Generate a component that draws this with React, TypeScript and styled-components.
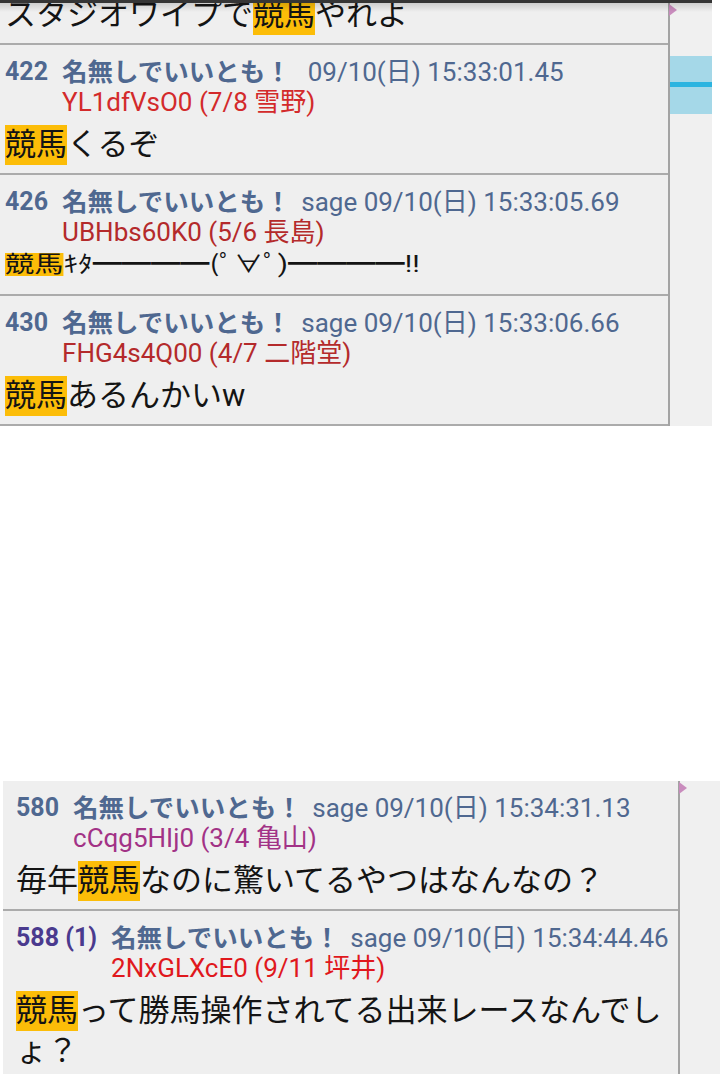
import React from 'react';
import styled, { createGlobalStyle } from 'styled-components';

const GlobalStyle = createGlobalStyle`
  html, body {
    margin: 0;
    padding: 0;
    background: #ffffff;
    overflow: hidden;
  }
  body {
    font-family: Roboto, "Noto Sans CJK JP", sans-serif;
  }
`;

const Page = styled.div`
  width: 720px;
  height: 1074px;
  overflow: hidden;
  background: #ffffff;
`;

const Panel = styled.div<{ $offset: number; $top?: boolean }>`
  display: flex;
  flex-direction: column;
  margin-left: ${p => p.$offset}px;
  margin-top: ${p => (p.$top ? 0 : 355)}px;
  width: ${p => (p.$top ? '712px' : 'auto')};
  background: #efefef;
`;

const TopBar = styled.div`
  height: 3px;
  background: #353535;
  position: relative;

  &::after {
    content: '';
    position: absolute;
    left: 0;
    right: 0;
    top: 3px;
    height: 9px;
    background: linear-gradient(rgba(0, 0, 0, 0.14), rgba(0, 0, 0, 0));
    z-index: 2;
  }
`;

const Frame = styled.div`
  display: flex;
`;

const Column = styled.div<{ $width: number; $inset: number }>`
  width: ${p => p.$width}px;
  flex: none;
  overflow: hidden;
  --inset: ${p => p.$inset}px;
`;

const VLine = styled.div`
  width: 2px;
  flex: none;
  background: #a3a3a3;
`;

const Strip = styled.div`
  flex: 1;
  display: flex;
  flex-direction: column;
  position: relative;
  background: #f0f0f0;
`;

const Marker = styled.div`
  position: absolute;
  left: -1px;
  top: 1px;
  width: 0;
  height: 0;
  border-top: 6px solid transparent;
  border-bottom: 6px solid transparent;
  border-left: 8px solid #c98cbd;
`;

const Thumb = styled.div`
  margin-top: 53px;
  height: 58px;
  background: linear-gradient(
    #a5d8e8 0,
    #a5d8e8 26px,
    #2cb4e0 26px,
    #2cb4e0 31px,
    #a5d8e8 31px
  );
`;

const Row = styled.div<{ $partial?: boolean; $last?: boolean }>`
  padding: ${p => (p.$partial ? 0 : 12)}px 6px 8px var(--inset);
  margin-top: ${p => (p.$partial ? -8 : 0)}px;
  border-bottom: 2px solid ${p => (p.$last ? 'transparent' : '#ababab')};
`;

const Head = styled.div`
  display: flex;
  gap: 14px;
`;

const Num = styled.div<{ $color?: string }>`
  font-size: 25px;
  line-height: 30px;
  font-weight: 700;
  color: ${p => p.$color || '#4f6890'};
  white-space: nowrap;
`;

const HeadMain = styled.div`
  display: flex;
  flex-direction: column;
  min-width: 0;
`;

const HeadLine = styled.div`
  font-size: 26px;
  line-height: 30px;
  color: #4f6890;
  white-space: pre;
`;

const Name = styled.span`
  font-size: 25.5px;
  font-weight: 700;
  margin-right: 4px;
`;

const IdLine = styled.div<{ $color: string }>`
  font-size: 26px;
  line-height: 30px;
  color: ${p => p.$color};
  white-space: nowrap;
`;

const Body = styled.div<{ $partial?: boolean }>`
  margin-top: ${p => (p.$partial ? 0 : 8)}px;
  font-size: 31px;
  line-height: 40px;
  color: #141414;
  line-break: loose;
`;

const AABody = styled.div`
  margin: 6px 0 10px;
  font-size: 23px;
  line-height: 23px;
  color: #141414;
  white-space: nowrap;
`;

const AAText = styled.span`
  display: inline-block;
  transform: scaleX(1.27);
  transform-origin: left center;
`;

const Mark = styled.span<{ $small?: boolean }>`
  display: inline-block;
  background: #fcbd08;
  line-height: ${p => (p.$small ? 23 : 40)}px;
`;

type Post = {
  no: string;
  noColor?: string;
  mail: string;
  date: string;
  id: string;
  idColor: string;
  text: string;
  aa?: boolean;
};

const WORD = '競馬';

const highlight = (text: string, small?: boolean) =>
  text.split(WORD).map((part, i) => (
    <React.Fragment key={i}>
      {i > 0 && <Mark $small={small}>{WORD}</Mark>}
      {part}
    </React.Fragment>
  ));

const topPosts: Post[] = [
  {
    no: '422',
    mail: '',
    date: '09/10(日) 15:33:01.45',
    id: 'YL1dfVsO0 (7/8 雪野)',
    idColor: '#d32a2b',
    text: '競馬くるぞ',
  },
  {
    no: '426',
    mail: 'sage',
    date: '09/10(日) 15:33:05.69',
    id: 'UBHbs60K0 (5/6 長島)',
    idColor: '#b42a2b',
    text: '競馬ｷﾀ━━━━(ﾟ∀ﾟ)━━━━!!',
    aa: true,
  },
  {
    no: '430',
    mail: 'sage',
    date: '09/10(日) 15:33:06.66',
    id: 'FHG4s4Q00 (4/7 二階堂)',
    idColor: '#b42a2b',
    text: '競馬あるんかいw',
  },
];

const bottomPosts: Post[] = [
  {
    no: '580',
    mail: 'sage',
    date: '09/10(日) 15:34:31.13',
    id: 'cCqg5HIj0 (3/4 亀山)',
    idColor: '#a23286',
    text: '毎年競馬なのに驚いてるやつはなんなの？',
  },
  {
    no: '588 (1)',
    noColor: '#4a3a8e',
    mail: 'sage',
    date: '09/10(日) 15:34:44.46',
    id: '2NxGLXcE0 (9/11 坪井)',
    idColor: '#e0181d',
    text: '競馬って勝馬操作されてる出来レースなんでしょ？',
  },
];

const PostRow = ({ post, last }: { post: Post; last?: boolean }) => (
  <Row $last={last}>
    <Head>
      <Num $color={post.noColor}>{post.no}</Num>
      <HeadMain>
        <HeadLine>
          <Name>名無しでいいとも！</Name>
          {` ${post.mail} ${post.date}`}
        </HeadLine>
        <IdLine $color={post.idColor}>{post.id}</IdLine>
      </HeadMain>
    </Head>
    {post.aa ? (
      <AABody>
        <AAText>{highlight(post.text, true)}</AAText>
      </AABody>
    ) : (
      <Body>{highlight(post.text)}</Body>
    )}
  </Row>
);

export default function App() {
  return (
    <Page>
      <GlobalStyle />
      <Panel $offset={0} $top>
        <TopBar />
        <Frame>
          <Column $width={668} $inset={5}>
            <Row $partial>
              <Body $partial>{highlight('スタジオワイプで競馬やれよ')}</Body>
            </Row>
            {topPosts.map(p => (
              <PostRow key={p.no} post={p} />
            ))}
          </Column>
          <VLine />
          <Strip>
            <Marker />
            <Thumb />
          </Strip>
        </Frame>
      </Panel>
      <Panel $offset={3}>
        <Frame>
          <Column $width={675} $inset={13}>
            {bottomPosts.map((p, i) => (
              <PostRow key={p.no} post={p} last={i === bottomPosts.length - 1} />
            ))}
          </Column>
          <VLine />
          <Strip>
            <Marker />
          </Strip>
        </Frame>
      </Panel>
    </Page>
  );
}
